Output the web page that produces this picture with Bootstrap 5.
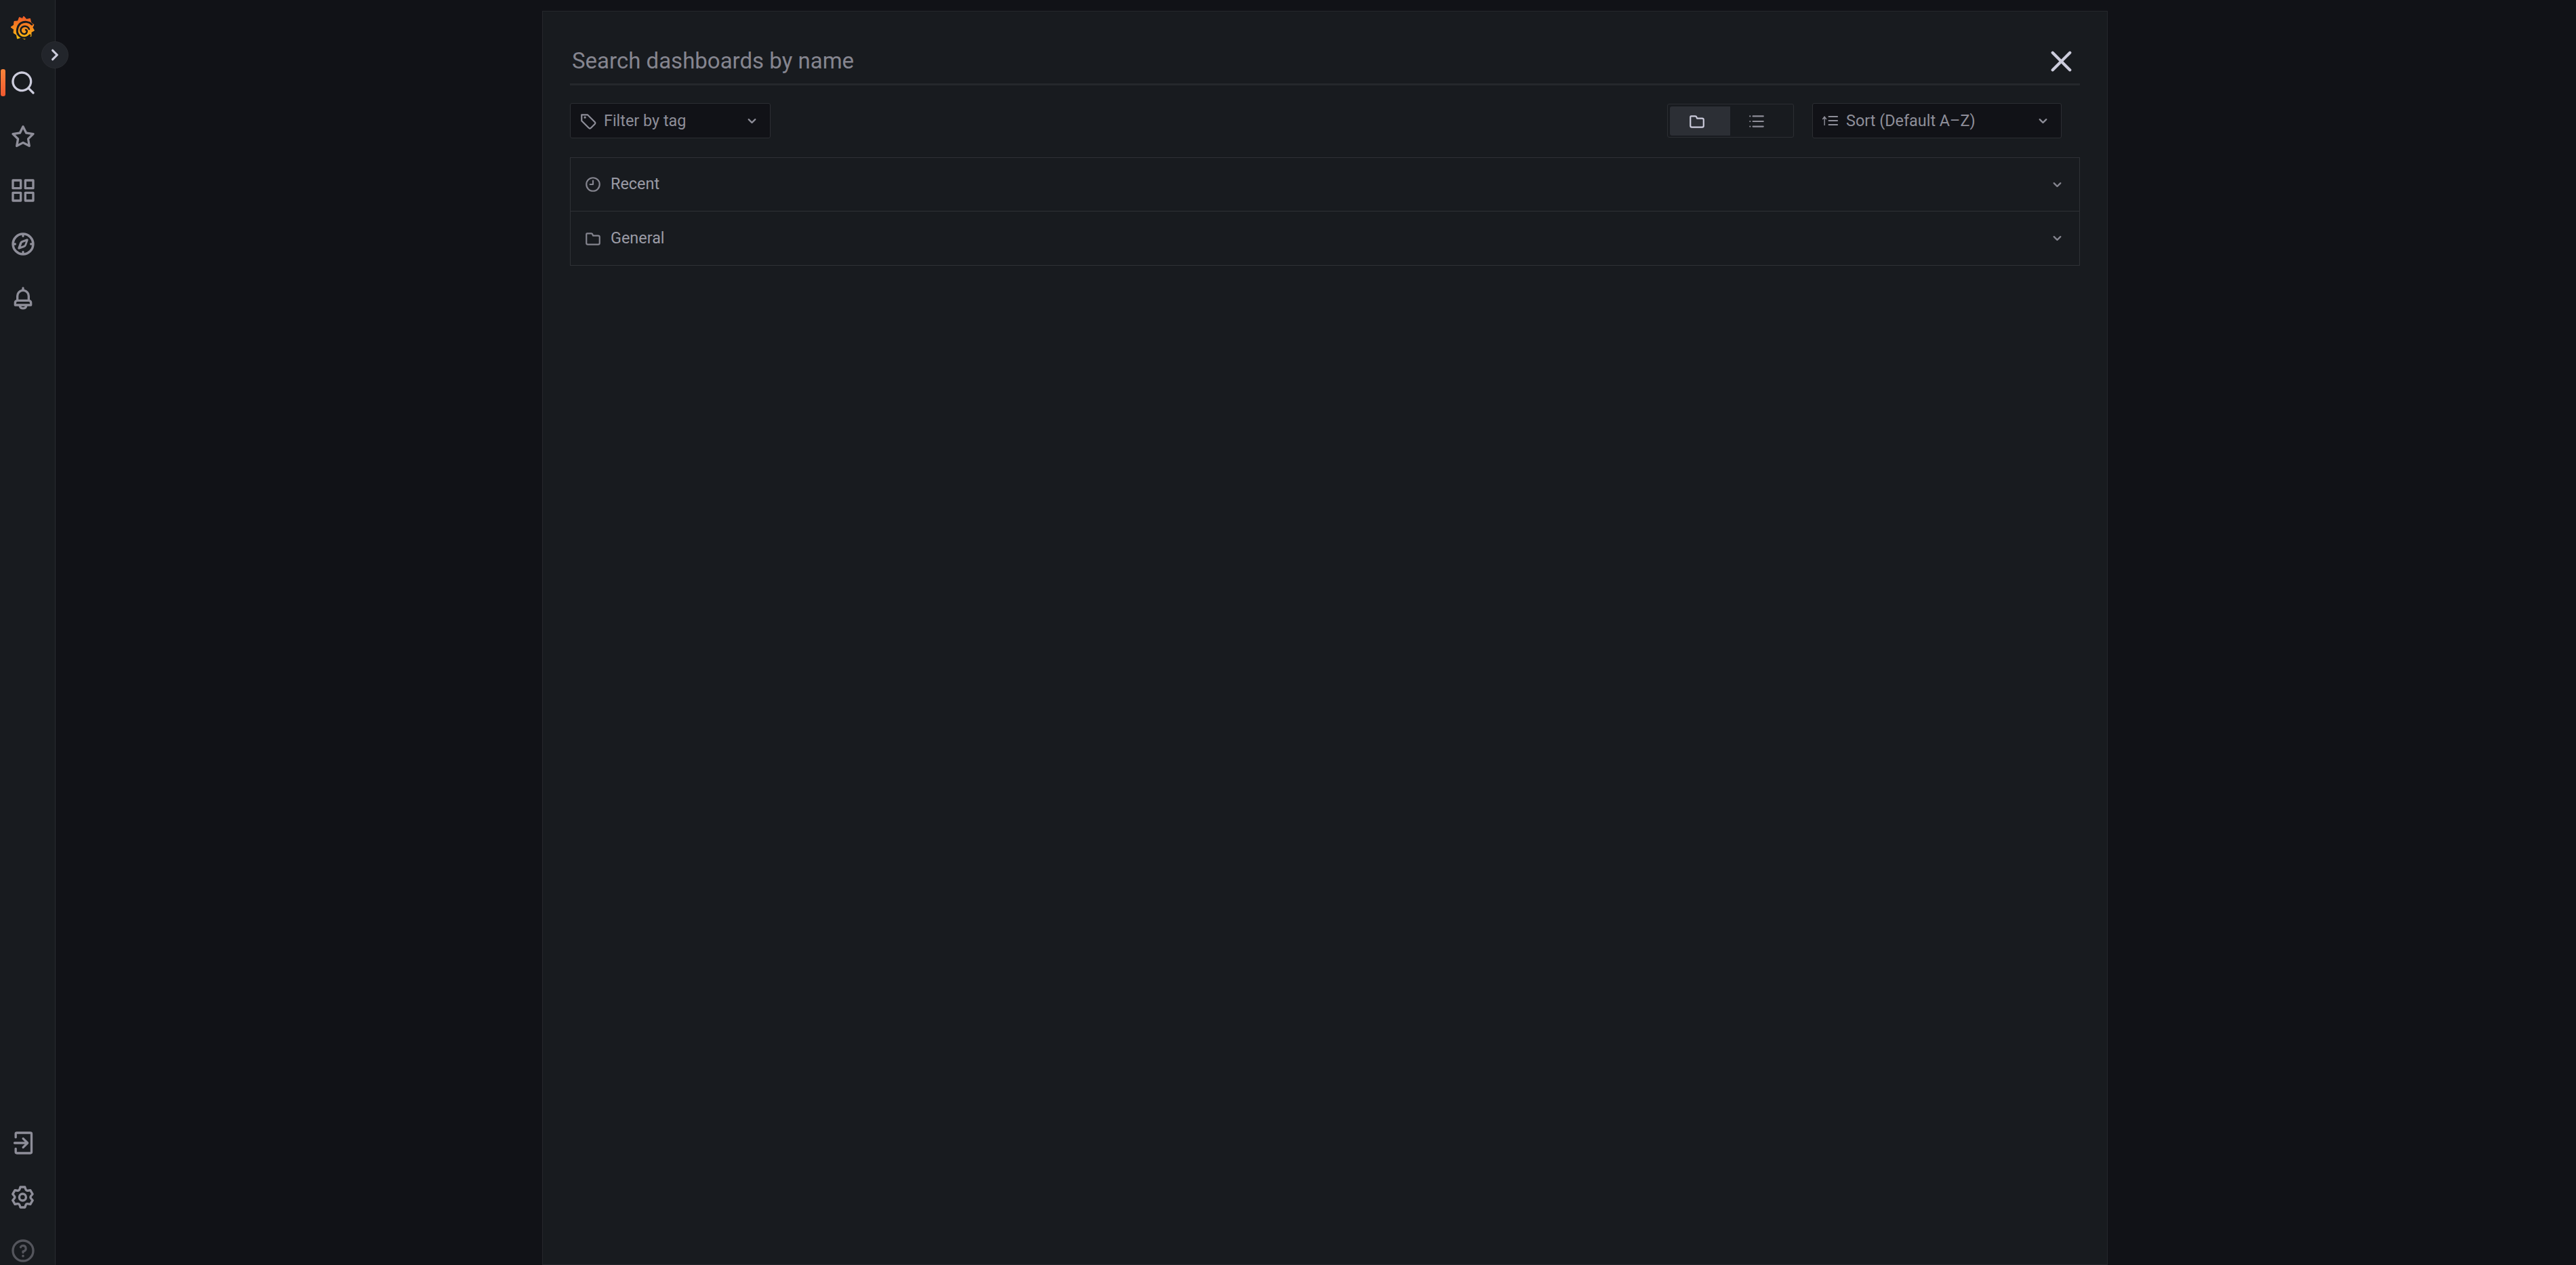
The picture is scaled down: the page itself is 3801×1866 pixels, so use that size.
<!DOCTYPE html>
<html lang="en">
<head>
  <meta charset="UTF-8">
  <title>Grafana - Search</title>
  <link href="https://cdn.jsdelivr.net/npm/bootstrap@5.3.2/dist/css/bootstrap.min.css" rel="stylesheet">
  <style>
    html, body { height: 100%; }
    body { background: #111217; font-family: Roboto, "Liberation Sans", sans-serif; color: #9b9ba6; overflow: hidden; }
    .shell { height: 1866px; }

    .side-nav { width: 82px; flex: none; background: #181b1f; border-right: 1px solid #2a2c31; position: relative; }
    .nav-top, .nav-bottom { width: 67px; }
    .nav-logo { height: 84px; padding-top: 2px; }
    .nav-item-g { height: 79.5px; color: #8e8e99; position: relative; }
    .nav-item-g.is-active { color: #ccccdc; }
    .nav-item-g.is-active::before { content: ""; position: absolute; left: 1px; top: 20px; width: 7px; height: 40px; border-radius: 3px; background: linear-gradient(180deg, #f9843a, #f0582f); }
    .nav-item-g.is-dim { color: #54555c; }
    .nav-top .nav-item-g:first-of-type { margin-top: -2px; }
    .nav-bottom { margin-bottom: -19px; }
    .expand-btn { position: absolute; left: 61px; top: 61px; width: 40px; height: 40px; border-radius: 50%; background: #22252b; border: 1px solid #2a2c31; color: #ccccdc; padding: 0; }
    .ico-40 { width: 40px; height: 40px; fill: currentColor; }
    .ico-26 { width: 26px; height: 26px; fill: currentColor; flex: none; }

    .search-panel { width: 2310px; margin-left: 718px; margin-top: 16px; height: 1850px; background: #181b1f; border: 1px solid #25272c; padding: 0 40px; }
    .search-head { height: 109px; padding: 49px 0 9px; border-bottom: 3px solid #25282c; }
    .search-box.form-control { background: transparent; border: 0; box-shadow: none; padding: 0 0 0 3px; height: 48px; font-size: 33px; }
    .search-box::placeholder { color: #85858f; opacity: 1; }
    .close-x { color: #ccccdc; background: none; border: 0; padding: 0; margin-right: 2px; line-height: 0; flex: none; }
    .close-x svg { width: 51px; height: 51px; fill: currentColor; }

    .tool-row { height: 107px; padding: 0 27px 3px 0; }
    .pick-box.btn { height: 52px; background: #111217; border: 1px solid #2c2e33; border-radius: 3px; color: #8e8e99; font-size: 23.4px; padding: 0 13px; }
    .pick-box .ico-26 { margin-right: 10px; }
    .pick-box span { padding-top: 2px; }
    .tag-pick { width: 296px; }
    .sort-pick { width: 368px; margin-left: 27px; }
    .chev { width: 27px; height: 27px; fill: currentColor; flex: none; }

    .layout-group { width: 187px; height: 50px; border: 1px solid #2c2e33; border-radius: 3px; padding: 3px; }
    .layout-group .btn { width: 89px; height: 43px; flex: none; padding: 0 10px 0 0; border: 0; border-radius: 3px; color: #8e8e99; }
    .layout-group .btn.is-on { background: #2c2f35; color: #ccccdc; }

    .section-list.list-group { margin-top: -1px; border-radius: 0; }
    .section-row.list-group-item { height: 80px; background: transparent; border-color: #2f3136; border-radius: 0 !important; color: #9b9ba6; font-size: 23.4px; padding: 0 19px 0 20px; }
    .section-row .ico-26 { color: #85858f; margin-right: 13px; }
    .section-row .chev { color: #85858f; }
  </style>
</head>
<body>
  <div class="shell d-flex">
    <nav class="side-nav d-flex flex-column justify-content-between">
      <div class="nav-top">
        <div class="nav-logo d-flex align-items-center justify-content-center">
          <svg width="35" height="40" viewBox="0 0 35 40">
            <defs><linearGradient id="gLogo" x1="0" y1="0" x2="0" y2="1"><stop offset="0" stop-color="#f05a28"/><stop offset=".5" stop-color="#f6891f"/><stop offset="1" stop-color="#fcc40d"/></linearGradient></defs>
            <path fill="url(#gLogo)" stroke="url(#gLogo)" stroke-linejoin="round" d="M19 1l4 4.500 5.500-1 1 5.500 4.500 3.500-2 4 2.500 4.500-4.500 2.500 0 6-6-.5-3.500 5-5-3-6 2-1-5.500-4.500-3 .5-5-4.500-3.500 4.500-3 .5-5.500 5.500-.5 2-5.500 4.500 2z"/>
            <path fill="none" stroke="#181b1f" stroke-width="3" stroke-linecap="round" d="M31 13C27 9 20 8 15 11 9 15 8 24 11 28 15 34 24 34 28 29"/>
            <path fill="none" stroke="#181b1f" stroke-width="2.500" stroke-linecap="round" d="M27 20C25 15 18 14 15 19 13 24 17 28 21 27 24 26 25 22 22 21"/>
          </svg>
        </div>
        <a class="nav-item-g is-active d-flex align-items-center justify-content-center" href="#">
          <svg class="ico-40" viewBox="0 0 24 24"><path d="M21.71,20.29,18,16.61A9,9,0,1,0,16.61,18l3.68,3.68a1,1,0,0,0,1.42,0A1,1,0,0,0,21.71,20.29ZM11,18a7,7,0,1,1,7-7A7,7,0,0,1,11,18Z"/></svg>
        </a>
        <a class="nav-item-g d-flex align-items-center justify-content-center" href="#">
          <svg class="ico-40" viewBox="0 0 24 24"><path d="M22,9.67A1,1,0,0,0,21.14,9l-5.69-.83L12.9,3a1,1,0,0,0-1.8,0L8.55,8.16,2.86,9a1,1,0,0,0-.81.68,1,1,0,0,0,.25,1l4.13,4-1,5.68A1,1,0,0,0,6.9,21.44L12,18.77l5.1,2.67a.93.93,0,0,0,.46.12,1,1,0,0,0,.59-.19,1,1,0,0,0,.4-1l-1-5.68,4.13-4A1,1,0,0,0,22,9.67Zm-6.15,4a1,1,0,0,0-.29.88l.72,4.2-3.76-2a1.06,1.06,0,0,0-.94,0l-3.76,2,.72-4.2a1,1,0,0,0-.29-.88l-3-3,4.21-.61a1,1,0,0,0,.76-.55L12,5.7l1.88,3.82a1,1,0,0,0,.76.55l4.21.61Z"/></svg>
        </a>
        <a class="nav-item-g d-flex align-items-center justify-content-center" href="#">
          <svg class="ico-40" viewBox="0 0 24 24"><path fill-rule="evenodd" d="M3 2h7a1 1 0 0 1 1 1v7a1 1 0 0 1-1 1H3a1 1 0 0 1-1-1V3a1 1 0 0 1 1-1Zm1 2v5h5V4ZM14 2h7a1 1 0 0 1 1 1v7a1 1 0 0 1-1 1h-7a1 1 0 0 1-1-1V3a1 1 0 0 1 1-1Zm1 2v5h5V4ZM3 13h7a1 1 0 0 1 1 1v7a1 1 0 0 1-1 1H3a1 1 0 0 1-1-1v-7a1 1 0 0 1 1-1Zm1 2v5h5v-5ZM14 13h7a1 1 0 0 1 1 1v7a1 1 0 0 1-1 1h-7a1 1 0 0 1-1-1v-7a1 1 0 0 1 1-1Zm1 2v5h5v-5Z"/></svg>
        </a>
        <a class="nav-item-g d-flex align-items-center justify-content-center" href="#">
          <svg class="ico-40" viewBox="0 0 24 24"><path fill-rule="evenodd" d="M12 2a10 10 0 1 0 0 20 10 10 0 0 0 0-20Zm1 17.900V19a1 1 0 0 0-2 0v.9A8 8 0 0 1 4.100 13H5a1 1 0 0 0 0-2h-.9A8 8 0 0 1 11 4.100V5a1 1 0 0 0 2 0v-.9a8 8 0 0 1 6.900 6.900H19a1 1 0 0 0 0 2h.9a8 8 0 0 1-6.900 6.900ZM15.500 7.400l-4.600 1.600a3 3 0 0 0-1.900 1.900L7.400 15.500a.9.9 0 0 0 1.100 1.100l4.600-1.600a3 3 0 0 0 1.900-1.900l1.600-4.600a.9.9 0 0 0-1.100-1.100Zm-2 4.900a1.500 1.500 0 0 1-.9.900l-2.500.9.900-2.500a1.500 1.500 0 0 1 .9-.9l2.500-.9Z"/></svg>
        </a>
        <a class="nav-item-g d-flex align-items-center justify-content-center" href="#">
          <svg class="ico-40" viewBox="0 0 24 24"><path d="M18,13.18V10a6,6,0,0,0-5-5.910V3a1,1,0,0,0-2,0V4.090A6,6,0,0,0,6,10v3.180A3,3,0,0,0,4,16v2a1,1,0,0,0,1,1H8.140a4,4,0,0,0,7.720,0H19a1,1,0,0,0,1-1V16A3,3,0,0,0,18,13.180ZM8,10a4,4,0,0,1,8,0v3H8Zm4,10a2,2,0,0,1-1.720-1h3.440A2,2,0,0,1,12,20Zm6-3H6V16a1,1,0,0,1,1-1H17a1,1,0,0,1,1,1Z"/></svg>
        </a>
      </div>
      <div class="nav-bottom">
        <a class="nav-item-g d-flex align-items-center justify-content-center" href="#">
          <svg class="ico-40" viewBox="0 0 24 24"><path d="M18.500 2H6.500a2 2 0 0 0-2 2v3a1 1 0 0 0 2 0V4h12v16h-12v-3a1 1 0 0 0-2 0v3a2 2 0 0 0 2 2h12a2 2 0 0 0 2-2V4a2 2 0 0 0-2-2ZM11.300 15.300a1 1 0 0 0 1.400 1.400l4-4a1 1 0 0 0 0-1.400l-4-4a1 1 0 0 0-1.400 1.400L13.600 11H4.500a1 1 0 0 0 0 2h9.100Z"/></svg>
        </a>
        <a class="nav-item-g d-flex align-items-center justify-content-center" href="#">
          <svg class="ico-40" viewBox="0 0 24 24"><path d="M19.900,12.660a1,1,0,0,1,0-1.320L21.180,9.900a1,1,0,0,0,.12-1.170l-2-3.460a1,1,0,0,0-1.070-.48l-1.880.38a1,1,0,0,1-1.150-.66l-.61-1.830A1,1,0,0,0,13.640,2h-4a1,1,0,0,0-1,.68L8.080,4.510a1,1,0,0,1-1.150.66L5,4.790A1,1,0,0,0,4,5.270L2,8.730A1,1,0,0,0,2.100,9.900l1.270,1.440a1,1,0,0,1,0,1.320L2.100,14.100A1,1,0,0,0,2,15.270l2,3.460a1,1,0,0,0,1.070.48l1.880-.38a1,1,0,0,1,1.150.66l.61,1.830a1,1,0,0,0,1,.68h4a1,1,0,0,0,.95-.68l.61-1.830a1,1,0,0,1,1.150-.66l1.880.38a1,1,0,0,0,1.070-.48l2-3.460a1,1,0,0,0-.12-1.170ZM18.410,14l.8.9-1.280,2.220-1.180-.24a3,3,0,0,0-3.450,2L12.920,20H10.360L10,18.860a3,3,0,0,0-3.450-2l-1.180.24L4.070,14.890l.8-.9a3,3,0,0,0,0-4l-.8-.9L5.350,6.890l1.180.24a3,3,0,0,0,3.450-2L10.360,4h2.560l.38,1.140a3,3,0,0,0,3.450,2l1.180-.24,1.280,2.220-.8.9A3,3,0,0,0,18.410,14ZM11.640,8a4,4,0,1,0,4,4A4,4,0,0,0,11.640,8Zm0,6a2,2,0,1,1,2-2A2,2,0,0,1,11.640,14Z"/></svg>
        </a>
        <a class="nav-item-g is-dim d-flex align-items-center justify-content-center" href="#">
          <svg class="ico-40" viewBox="0 0 24 24"><path d="M12 2a10 10 0 1 0 0 20 10 10 0 0 0 0-20Zm0 18a8 8 0 1 1 0-16 8 8 0 0 1 0 16Z"/><path d="M12 6.500a3.500 3.500 0 0 0-3 1.750 1 1 0 1 0 1.730 1A1.500 1.500 0 1 1 12 11.500a1 1 0 0 0-1 1v1a1 1 0 0 0 2 0v-.17a3.500 3.500 0 0 0-1-6.830ZM12 15.500a1.100 1.100 0 1 0 0 2.200 1.100 1.100 0 0 0 0-2.200Z"/></svg>
        </a>
      </div>
      <button class="expand-btn btn d-flex align-items-center justify-content-center" type="button" aria-label="Expand">
        <svg width="40" height="40" viewBox="0 0 24 24" fill="currentColor"><path d="M14.830 11.290 10.590 7.050a1 1 0 0 0-1.420 1.410L12.710 12l-3.540 3.540a1 1 0 0 0 1.420 1.410l4.240-4.240a1 1 0 0 0 0-1.420Z"/></svg>
      </button>
    </nav>

    <main class="search-panel">
      <div class="search-head d-flex align-items-center justify-content-between">
        <input class="search-box form-control" type="text" placeholder="Search dashboards by name">
        <button class="close-x" type="button" aria-label="Close">
          <svg viewBox="0 0 24 24"><path d="M13.410 12l5.300-5.290a1 1 0 1 0-1.420-1.420L12 10.590 6.710 5.290a1 1 0 0 0-1.420 1.420L10.590 12l-5.300 5.290a1 1 0 1 0 1.420 1.420L12 13.410l5.290 5.300a1 1 0 0 0 1.420-1.420Z"/></svg>
        </button>
      </div>

      <div class="tool-row d-flex align-items-center justify-content-between">
        <button class="pick-box tag-pick btn d-flex align-items-center" type="button">
          <svg class="ico-26" viewBox="0 0 24 24"><path d="M7.500 6a1.500 1.500 0 1 0 0 3 1.500 1.500 0 0 0 0-3Zm14.120 7.170-9.760-9.750A1 1 0 0 0 11.150 3H3a1 1 0 0 0-1 1v8.150a1 1 0 0 0 .29.710l9.760 9.760a3 3 0 0 0 4.240 0l5.330-5.330a3 3 0 0 0 0-4.120Zm-1.410 2.710-5.340 5.330a1 1 0 0 1-1.410 0L4 11.740V5h6.740l9.470 9.460a1 1 0 0 1 0 1.420Z"/></svg>
          <span>Filter by tag</span>
          <svg class="chev ms-auto" viewBox="0 0 24 24"><path d="M17 9.170a1 1 0 0 0-1.410 0L12 12.710 8.460 9.170a1 1 0 1 0-1.410 1.420l4.240 4.240a1 1 0 0 0 1.420 0L17 10.590a1 1 0 0 0 0-1.420Z"/></svg>
        </button>
        <div class="d-flex align-items-center">
          <div class="layout-group btn-group" role="group">
            <button class="btn is-on d-flex align-items-center justify-content-center" type="button" aria-label="Folders">
              <svg class="ico-26" viewBox="0 0 24 24"><path d="M19 7h-6.280l-.32-1a3 3 0 0 0-2.840-2H4a2 2 0 0 0-2 2v12a3 3 0 0 0 3 3h14a3 3 0 0 0 3-3v-8a3 3 0 0 0-3-3Zm1 11a1 1 0 0 1-1 1H5a1 1 0 0 1-1-1V6h5.560a1 1 0 0 1 .95.68l.54 1.640A1 1 0 0 0 12 9h7a1 1 0 0 1 1 1Z"/></svg>
            </button>
            <button class="btn d-flex align-items-center justify-content-center" type="button" aria-label="List">
              <svg class="ico-26" viewBox="0 0 24 24"><path d="M7 6h14a1 1 0 0 0 0-2H7a1 1 0 0 0 0 2Zm14 5H7a1 1 0 0 0 0 2h14a1 1 0 0 0 0-2Zm0 7H7a1 1 0 0 0 0 2h14a1 1 0 0 0 0-2ZM3 4a1 1 0 1 0 0 2 1 1 0 0 0 0-2Zm0 7a1 1 0 1 0 0 2 1 1 0 0 0 0-2Zm0 7a1 1 0 1 0 0 2 1 1 0 0 0 0-2Z"/></svg>
            </button>
          </div>
          <button class="pick-box sort-pick btn d-flex align-items-center" type="button">
            <svg class="ico-26" viewBox="0 0 24 24"><path d="M3.200 9 1.500 10.600.7 9.800 3.800 5.500 6.900 9.800 6.100 10.600 4.500 9V18.500H3.200ZM9 5.500h13v1.800H9Zm0 5.600h13v1.800H9Zm0 5.600h13v1.800H9Z"/></svg>
            <span>Sort (Default A–Z)</span>
            <svg class="chev ms-auto" viewBox="0 0 24 24"><path d="M17 9.170a1 1 0 0 0-1.410 0L12 12.710 8.460 9.170a1 1 0 1 0-1.410 1.420l4.240 4.240a1 1 0 0 0 1.420 0L17 10.590a1 1 0 0 0 0-1.420Z"/></svg>
          </button>
        </div>
      </div>

      <div class="section-list list-group">
        <div class="section-row list-group-item d-flex align-items-center">
          <svg class="ico-26" viewBox="0 0 24 24"><path d="M12 2a10 10 0 1 0 0 20 10 10 0 0 0 0-20Zm0 18a8 8 0 1 1 0-16 8 8 0 0 1 0 16Zm1-8V7a1 1 0 0 0-2 0v4H8a1 1 0 0 0 0 2h4a1 1 0 0 0 1-1Z"/></svg>
          <span>Recent</span>
          <svg class="chev ms-auto" viewBox="0 0 24 24"><path d="M17 9.170a1 1 0 0 0-1.410 0L12 12.710 8.460 9.170a1 1 0 1 0-1.410 1.420l4.240 4.240a1 1 0 0 0 1.420 0L17 10.590a1 1 0 0 0 0-1.420Z"/></svg>
        </div>
        <div class="section-row list-group-item d-flex align-items-center">
          <svg class="ico-26" viewBox="0 0 24 24"><path d="M19 7h-6.280l-.32-1a3 3 0 0 0-2.840-2H4a2 2 0 0 0-2 2v12a3 3 0 0 0 3 3h14a3 3 0 0 0 3-3v-8a3 3 0 0 0-3-3Zm1 11a1 1 0 0 1-1 1H5a1 1 0 0 1-1-1V6h5.560a1 1 0 0 1 .95.68l.54 1.640A1 1 0 0 0 12 9h7a1 1 0 0 1 1 1Z"/></svg>
          <span>General</span>
          <svg class="chev ms-auto" viewBox="0 0 24 24"><path d="M17 9.170a1 1 0 0 0-1.410 0L12 12.710 8.460 9.170a1 1 0 1 0-1.410 1.420l4.240 4.240a1 1 0 0 0 1.420 0L17 10.590a1 1 0 0 0 0-1.420Z"/></svg>
        </div>
      </div>
    </main>
  </div>
  <script src="https://cdn.jsdelivr.net/npm/bootstrap@5.3.2/dist/js/bootstrap.bundle.min.js"></script>
</body>
</html>
